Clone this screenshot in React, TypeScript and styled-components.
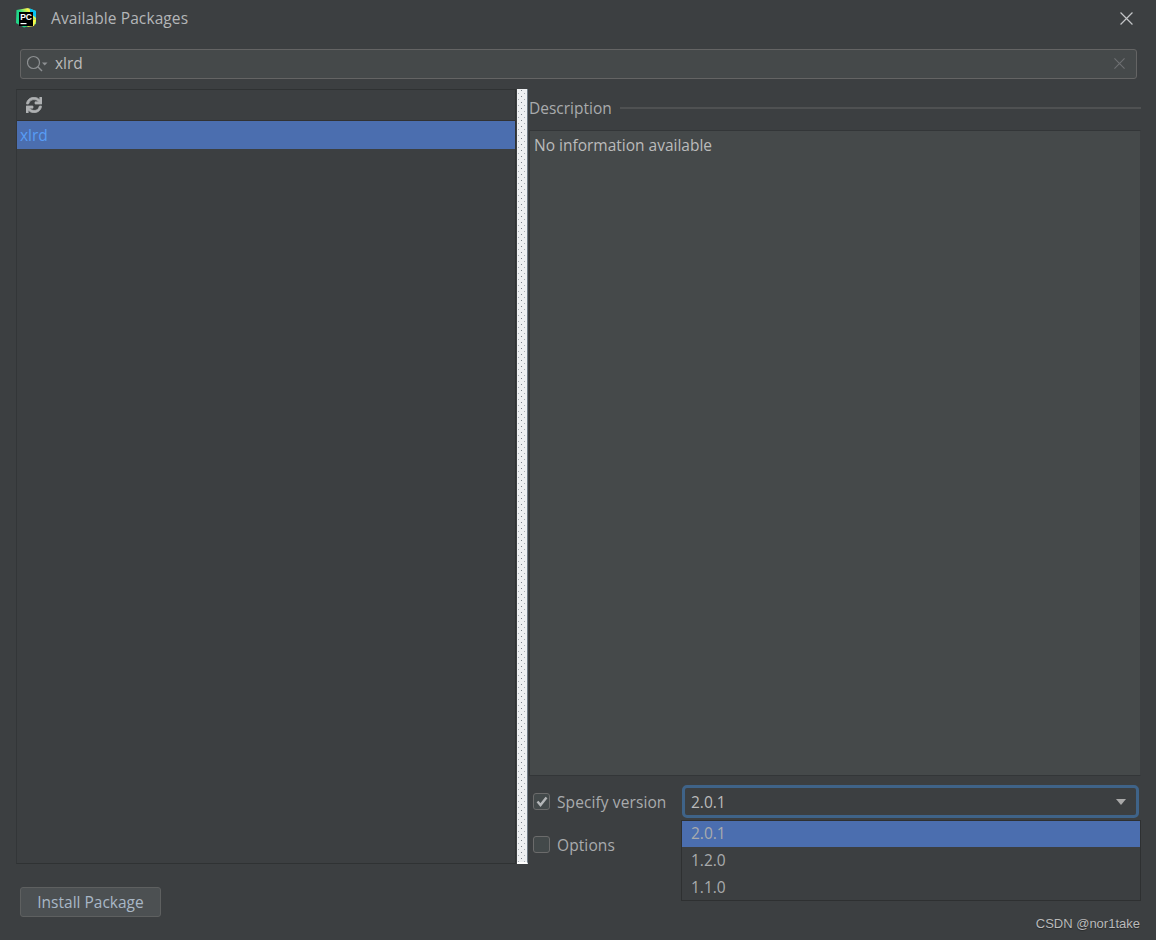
import React from "react";
import styled, { createGlobalStyle } from "styled-components";
import { FaSync } from "react-icons/fa";

const Global = createGlobalStyle`
  html, body { margin: 0; padding: 0; background: #3c3f41; }
  body { font-family: "Open Sans", "Noto Sans", "Liberation Sans", sans-serif; }
`;

const Dialog = styled.div`
  position: relative;
  width: 1156px;
  height: 940px;
  background: #3c3f41;
  color: #bbbbbb;
  overflow: hidden;
  font-size: 15.5px;
  display: flex;
  flex-direction: column;
`;

const TitleBar = styled.div`
  height: 36px;
  display: flex;
  align-items: center;
  padding: 0 23px 0 15px;
  flex: none;
`;

const Title = styled.span`
  margin-left: 14px;
  color: #b4b6b8;
  flex: 1;
  letter-spacing: 0.1px;
`;

const SearchField = styled.div`
  margin: 13px 19px 0 20px;
  height: 30px;
  box-sizing: border-box;
  background: #45494a;
  border: 1px solid #646464;
  border-radius: 3px;
  display: flex;
  align-items: center;
  padding: 0 11px 2px 6px;
  flex: none;
`;

const SearchText = styled.span`
  margin-left: 6px;
  flex: 1;
  color: #bbbbbb;
`;

const Body = styled.div`
  margin: 10px 15px 0 16px;
  height: 775px;
  display: flex;
  flex: none;
`;

const LeftPanel = styled.div`
  width: 500px;
  box-sizing: border-box;
  border: 1px solid #2f3233;
  border-left-color: #333638;
  display: flex;
  flex-direction: column;
  flex: none;
`;

const ListToolbar = styled.div`
  height: 31px;
  box-sizing: border-box;
  border-bottom: 1px solid #323232;
  display: flex;
  align-items: center;
  padding-left: 9px;
  color: #afb1b3;
  flex: none;
`;

const ListRow = styled.div`
  height: 28px;
  background: #4b6eaf;
  color: #589df6;
  padding-left: 3px;
  line-height: 29px;
`;

const Splitter = styled.div`
  width: 11px;
  margin-left: 1px;
  flex: none;
  box-sizing: border-box;
  border-right: 1px solid #6f7b85;
  border-bottom: 2px solid #ffffff;
  background-color: #eef0f2;
  background-image:
    radial-gradient(circle at 0.5px 0.5px, #7b838b 0 0.7px, transparent 0.9px),
    radial-gradient(circle at 0.5px 0.5px, #a8aeb4 0 0.7px, transparent 0.9px);
  background-size: 6px 6px, 6px 6px;
  background-position: 4px 1px, 7px 4px;
`;

const RightPane = styled.div`
  margin-left: 1px;
  flex: 1;
  display: flex;
  flex-direction: column;
  min-width: 0;
`;

const DescHeader = styled.div`
  height: 41px;
  box-sizing: border-box;
  padding-bottom: 3px;
  flex: none;
  display: flex;
  align-items: center;
  gap: 8px;
  color: #a9abad;
`;

const DescRule = styled.div`
  flex: 1;
  height: 2px;
  background: #4f5152;
`;

const DescBox = styled.div`
  height: 646px;
  box-sizing: border-box;
  flex: none;
  background: #45494a;
  border: 1px solid #333638;
  border-right-color: #3c3f41;
  padding: 4px 4px;
  line-height: 20px;
  color: #bbbbbb;
`;

const Form = styled.div`
  display: grid;
  grid-template-columns: 149px 1fr;
  grid-template-rows: 43px 43px;
  padding: 4px 2px 0 4px;
  align-items: center;
`;

const CheckRow = styled.label`
  display: flex;
  align-items: center;
  gap: 7px;
  color: #a9abad;
  letter-spacing: 0.1px;
`;

const Box = styled.span`
  width: 17px;
  height: 17px;
  box-sizing: border-box;
  border: 1px solid #6b6b6b;
  border-radius: 3px;
  background: #43494a;
  display: inline-flex;
  align-items: center;
  justify-content: center;
`;

const ComboWrap = styled.div`
  position: relative;
  height: 33px;
`;

const Combo = styled.div`
  height: 100%;
  box-sizing: border-box;
  border: 3px solid #3f6388;
  border-radius: 5px;
  background: #3c3f41;
  display: flex;
  align-items: center;
  padding: 0 10px 0 6px;
  justify-content: space-between;
`;

const Arrow = styled.span`
  width: 0;
  height: 0;
  border-left: 5px solid transparent;
  border-right: 5px solid transparent;
  border-top: 6px solid #a9a9a9;
`;

const Dropdown = styled.div`
  position: absolute;
  left: -1px;
  right: -2px;
  top: 35px;
  box-sizing: border-box;
  height: 81px;
  background: #3c3f41;
  border: 1px solid #2e3031;
  z-index: 2;
`;

const Option = styled.div<{ $selected?: boolean }>`
  height: ${(p) => (p.$selected ? "26px" : "27px")};
  line-height: ${(p) => (p.$selected ? "25px" : "27px")};
  padding-left: 9px;
  color: #a9abad;
  background: ${(p) => (p.$selected ? "#4b6eaf" : "transparent")};
`;

const Footer = styled.div`
  padding: 23px 0 0 20px;
`;

const InstallButton = styled.button`
  width: 141px;
  height: 30px;
  box-sizing: border-box;
  background: #4c5052;
  border: 1px solid #5e6060;
  border-radius: 3px;
  color: #a9b7c6;
  font: inherit;
  padding: 0;
`;

const Watermark = styled.div`
  position: absolute;
  right: 16px;
  bottom: 9px;
  font-family: "Liberation Sans", Arial, sans-serif;
  font-size: 13px;
  color: #b9b9b9;
  text-shadow: 0 1px 1px rgba(0, 0, 0, 0.35);
`;

const PcLogo = () => (
  <svg width="22" height="22" viewBox="0 0 22 22">
    <defs>
      <linearGradient id="pcg" x1="0" y1="1" x2="1" y2="0">
        <stop offset="0" stopColor="#21d789" />
        <stop offset="0.5" stopColor="#21d789" />
        <stop offset="0.75" stopColor="#fcf84a" />
        <stop offset="1" stopColor="#07c3f2" />
      </linearGradient>
    </defs>
    <path d="M1.5 3 L13 1 L21 4 L21 17 L9 20.5 L1 16 Z" fill="url(#pcg)" />
    <path d="M15 1.5 L21 4 L21 11 L15 6 Z" fill="#07c3f2" />
    <path d="M12 20 L19 19 L21 13 L18 13 Z" fill="#fcf84a" />
    <rect x="4" y="5" width="14" height="14" fill="#000" />
    <text x="5.2" y="12.5" fontSize="8.5" fontWeight="700" fill="#fff" fontFamily="Liberation Sans, sans-serif">PC</text>
    <rect x="5.5" y="16" width="6" height="1.2" fill="#fff" />
  </svg>
);

const SearchIcon = () => (
  <svg width="22" height="20" viewBox="0 0 22 20" fill="none">
    <circle cx="6.5" cy="9.5" r="6" stroke="#8d9092" strokeWidth="1.2" />
    <path d="M10.8 13.8 L15 18" stroke="#8d9092" strokeWidth="1.4" />
    <path d="M15 9.5 L20.5 9.5 L17.7 12.5 Z" fill="#8d9092" />
  </svg>
);

const Cross = ({ size, color, w }: { size: number; color: string; w: number }) => (
  <svg width={size} height={size} viewBox="0 0 12 12" fill="none">
    <path d="M0.5 0.5 L11.5 11.5 M11.5 0.5 L0.5 11.5" stroke={color} strokeWidth={w} />
  </svg>
);

const Check = () => (
  <svg width="12" height="11" viewBox="0 0 12 11" fill="none">
    <path d="M1.5 5.5 L4.5 9 L10.5 1.5" stroke="#b4b6b8" strokeWidth="2.4" />
  </svg>
);

export default function App() {
  return (
    <Dialog>
      <Global />
      <TitleBar>
        <PcLogo />
        <Title>Available Packages</Title>
        <Cross size={13} color="#c4c6c8" w={1.1} />
      </TitleBar>
      <SearchField>
        <SearchIcon />
        <SearchText>xlrd</SearchText>
        <Cross size={11} color="#6e7072" w={1.2} />
      </SearchField>
      <Body>
        <LeftPanel>
          <ListToolbar>
            <FaSync size={16} stroke="currentColor" strokeWidth={24} />
          </ListToolbar>
          <ListRow>xlrd</ListRow>
        </LeftPanel>
        <Splitter />
        <RightPane>
          <DescHeader>
            <span>Description</span>
            <DescRule />
          </DescHeader>
          <DescBox>No information available</DescBox>
          <Form>
            <CheckRow>
              <Box><Check /></Box>
              Specify version
            </CheckRow>
            <ComboWrap>
              <Combo>
                <span>2.0.1</span>
                <Arrow />
              </Combo>
              <Dropdown>
                <Option $selected>2.0.1</Option>
                <Option>1.2.0</Option>
                <Option>1.1.0</Option>
              </Dropdown>
            </ComboWrap>
            <CheckRow>
              <Box />
              Options
            </CheckRow>
          </Form>
        </RightPane>
      </Body>
      <Footer>
        <InstallButton>Install Package</InstallButton>
      </Footer>
      <Watermark>CSDN @nor1take</Watermark>
    </Dialog>
  );
}
